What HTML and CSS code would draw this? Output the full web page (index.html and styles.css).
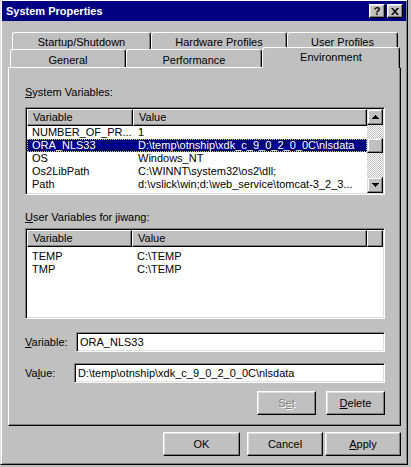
FILE: index.html
```html
<!DOCTYPE html>
<html>
<head>
<meta charset="utf-8">
<title>System Properties</title>
<link rel="stylesheet" href="styles.css">
</head>
<body>
<div class="window">
  <div class="titlebar">
    <span class="title">System Properties</span>
    <div class="tb-btns">
      <div class="tb tb-help">?</div>
      <div class="tb tb-close"><svg width="8" height="7" viewBox="0 0 8 7"><path d="M0 0h2l2 2.4L6 0h2L5 3.5 8 7H6L4 4.6 2 7H0l3-3.5z" fill="#000"/></svg></div>
    </div>
  </div>
  <div class="body">
    <div class="tabs">
      <div class="tabrow back">
        <div class="tab t-startup">Startup/Shutdown</div>
        <div class="tab t-hardware">Hardware Profiles</div>
        <div class="tab t-user">User Profiles</div>
      </div>
      <div class="tabrow front">
        <div class="tab t-general">General</div>
        <div class="tab t-perf">Performance</div>
        <div class="tab t-env active">Environment</div>
      </div>
    </div>
    <div class="panel">
      <div class="grouplabel"><u>S</u>ystem Variables:</div>
      <div class="listbox sys">
        <div class="list-main">
          <div class="lhead">
            <div class="hcell c1">Variable</div>
            <div class="hcell c2">Value</div>
          </div>
          <div class="row"><div class="cell c1">NUMBER_OF_PR...</div><div class="cell c2">1</div></div>
          <div class="row selected"><div class="cell c1">ORA_NLS33</div><div class="cell c2">D:\temp\otnship\xdk_c_9_0_2_0_0C\nlsdata</div></div>
          <div class="row"><div class="cell c1">OS</div><div class="cell c2">Windows_NT</div></div>
          <div class="row"><div class="cell c1">Os2LibPath</div><div class="cell c2">C:\WINNT\system32\os2\dll;</div></div>
          <div class="row"><div class="cell c1">Path</div><div class="cell c2">d:\vslick\win;d:\web_service\tomcat-3_2_3...</div></div>
        </div>
        <div class="vscroll">
          <div class="sbtn"><svg width="7" height="4" viewBox="0 0 7 4"><path d="M3 0h1v1h1v1h1v1h1v1H0V3h1V2h1V1h1z" fill="#000"/></svg></div>
          <div class="track"><div class="thumb"></div></div>
          <div class="sbtn"><svg width="7" height="4" viewBox="0 0 7 4"><path d="M0 0h7v1H6v1H5v1H4v1H3V3H2V2H1V1H0z" fill="#000"/></svg></div>
        </div>
      </div>
      <div class="grouplabel user-label"><u>U</u>ser Variables for jiwang:</div>
      <div class="listbox usr">
        <div class="list-main">
          <div class="lhead">
            <div class="hcell c1 u1">Variable</div>
            <div class="hcell c2 u2">Value</div>
            <div class="hcell c3"></div>
          </div>
          <div class="urows">
            <div class="row"><div class="cell c1 u1">TEMP</div><div class="cell c2">C:\TEMP</div></div>
            <div class="row"><div class="cell c1 u1">TMP</div><div class="cell c2">C:\TEMP</div></div>
          </div>
        </div>
      </div>
      <div class="field-row var-row">
        <label class="flabel var-label"><u>V</u>ariable:</label>
        <div class="edit">ORA_NLS33</div>
      </div>
      <div class="field-row val-row">
        <label class="flabel val-label">Va<u>l</u>ue:</label>
        <div class="edit">D:\temp\otnship\xdk_c_9_0_2_0_0C\nlsdata</div>
      </div>
      <div class="panel-buttons">
        <div class="btn small disabled">S<u>e</u>t</div>
        <div class="btn small"><u>D</u>elete</div>
      </div>
    </div>
    <div class="dlg-buttons">
      <div class="btn dlg ok">OK</div>
      <div class="btn dlg cancel">Cancel</div>
      <div class="btn dlg apply"><u>A</u>pply</div>
    </div>
  </div>
</div>
</body>
</html>
```
FILE: styles.css
```css
* { box-sizing: border-box; }
html, body { margin: 0; padding: 0; }
body {
  width: 411px;
  height: 467px;
  overflow: hidden;
  background: #c0c0c0;
  font-family: "Liberation Sans", Arial, sans-serif;
  font-size: 11px;
  color: #000;
}
u { text-decoration: underline; text-underline-offset: 1px; }

.window {
  width: 408px;
  height: 465px;
  background: #c0c0c0;
  border: 1px solid;
  border-top: 0;
  border-color: #dfdfdf #000 #000 #dfdfdf;
  box-shadow: inset 1px 1px #fff, inset -1px -1px #808080;
  padding: 1px 1px 2px 1px;
  display: flex;
  flex-direction: column;
}

.titlebar {
  height: 20px;
  background: #000080;
  display: flex;
  align-items: center;
  justify-content: space-between;
  padding: 0 3px 0 4px;
}
.title { color: #fff; font-weight: bold; font-size: 11px; }
.tb-btns { display: flex; gap: 2px; }
.tb {
  width: 16px;
  height: 14px;
  background: #c0c0c0;
  border: 1px solid;
  border-color: #fff #000 #000 #fff;
  box-shadow: inset -1px -1px #808080, inset 1px 1px #dfdfdf;
  display: flex;
  align-items: center;
  justify-content: center;
  font-weight: bold;
  font-size: 11px;
  line-height: 12px;
}

.body { padding: 11px 5px 0 6px; }

.tabrow { display: flex; }
.tabrow.back { height: 17px; margin-left: 4px; }
.tabrow.front { height: 18px; margin-left: 2px; align-items: flex-end; }
.tab {
  flex: none;
  background: #c0c0c0;
  border-top: 1px solid #fff;
  border-left: 1px solid #fff;
  border-right: 1px solid #000;
  box-shadow: inset -1px 0 #808080;
  border-radius: 3px 3px 0 0;
  display: flex;
  align-items: center;
  justify-content: center;
  white-space: nowrap;
}
.back .tab { height: 17px; padding-top: 1px; }
.front .tab { height: 18px; padding-top: 2px; }
.t-startup { width: 139px; }
.t-hardware { width: 136px; }
.t-user { width: 111px; }
.t-general { width: 116px; }
.t-perf { width: 136px; }
.front .tab.active {
  width: 138px;
  height: 21px;
  margin-bottom: -1px;
  padding-top: 0;
  padding-bottom: 2px;
  position: relative;
  z-index: 1;
}

.panel {
  height: 359px;
  border: 1px solid;
  border-color: #fff #000 #000 #fff;
  box-shadow: inset -1px -1px #808080;
  padding: 17px 15px 0 16px;
}
.grouplabel { height: 14px; line-height: 14px; }
.user-label { margin-top: 15px; }

.listbox {
  background: #fff;
  border: 1px solid;
  border-color: #808080 #fff #fff #808080;
  box-shadow: inset 1px 1px #000, inset -1px -1px #dfdfdf;
  padding: 1px;
  display: flex;
  overflow: hidden;
}
.listbox.sys { height: 88px; margin-top: 8px; }
.listbox.usr { height: 91px; margin-top: 4px; }
.list-main { flex: 1; min-width: 0; display: flex; flex-direction: column; }

.lhead { display: flex; height: 17px; flex: none; }
.hcell {
  background: #c0c0c0;
  border: 1px solid;
  border-color: #fff #000 #000 #fff;
  box-shadow: inset -1px -1px #808080;
  padding-left: 5px;
  line-height: 14px;
  white-space: nowrap;
}
.hcell.c1 { width: 106px; flex: none; }
.hcell.c2 { flex: 1; }
.hcell.u1 { width: 105px; }
.hcell.u2 { flex: none; width: 235px; }
.hcell.c3 { flex: 1; }

.row { display: flex; height: 13px; line-height: 13px; white-space: nowrap; }
.cell { overflow: hidden; padding-left: 5px; }
.cell.c1 { width: 106px; flex: none; }
.cell.u1 { width: 105px; }
.cell.c2 { flex: 1; }
.row.selected {
  background: #000080;
  color: #fff;
  outline: 1px dotted #c8c880;
  outline-offset: -1px;
}
.urows { padding-top: 3px; }

.vscroll {
  width: 16px;
  flex: none;
  display: flex;
  flex-direction: column;
  background: repeating-conic-gradient(#fff 0 25%, #c0c0c0 0 50%) 0 0 / 2px 2px;
}
.sbtn, .thumb {
  background: #c0c0c0;
  border: 1px solid;
  border-color: #dfdfdf #000 #000 #dfdfdf;
  box-shadow: inset -1px -1px #808080, inset 1px 1px #fff;
}
.sbtn { height: 16px; flex: none; display: flex; align-items: center; justify-content: center; }
.track { flex: 1; padding-top: 13px; }
.thumb { height: 15px; }

.field-row { display: flex; align-items: center; height: 20px; }
.var-row { margin-top: 13px; }
.val-row { margin-top: 11px; }
.flabel { flex: none; }
.var-label { width: 51px; }
.val-label { width: 49px; }
.edit {
  flex: 1;
  height: 20px;
  background: #fff;
  border: 1px solid;
  border-color: #808080 #fff #fff #808080;
  box-shadow: inset 1px 1px #000, inset -1px -1px #dfdfdf;
  padding-left: 3px;
  line-height: 18px;
  white-space: nowrap;
}

.btn {
  height: 24px;
  background: #c0c0c0;
  border: 1px solid;
  border-color: #fff #000 #000 #fff;
  box-shadow: inset -1px -1px #808080, inset 1px 1px #dfdfdf;
  display: flex;
  align-items: center;
  justify-content: center;
}
.btn.disabled { color: #808080; text-shadow: 1px 1px #fff; }
.panel-buttons { display: flex; justify-content: flex-end; gap: 10px; margin-top: 8px; }
.btn.small { width: 59px; }

.dlg-buttons { display: flex; justify-content: flex-end; margin-top: 6px; }
.btn.dlg { width: 76px; }
.btn.ok { width: 77px; margin-right: 7px; }
.btn.cancel { margin-right: 2px; }
```
